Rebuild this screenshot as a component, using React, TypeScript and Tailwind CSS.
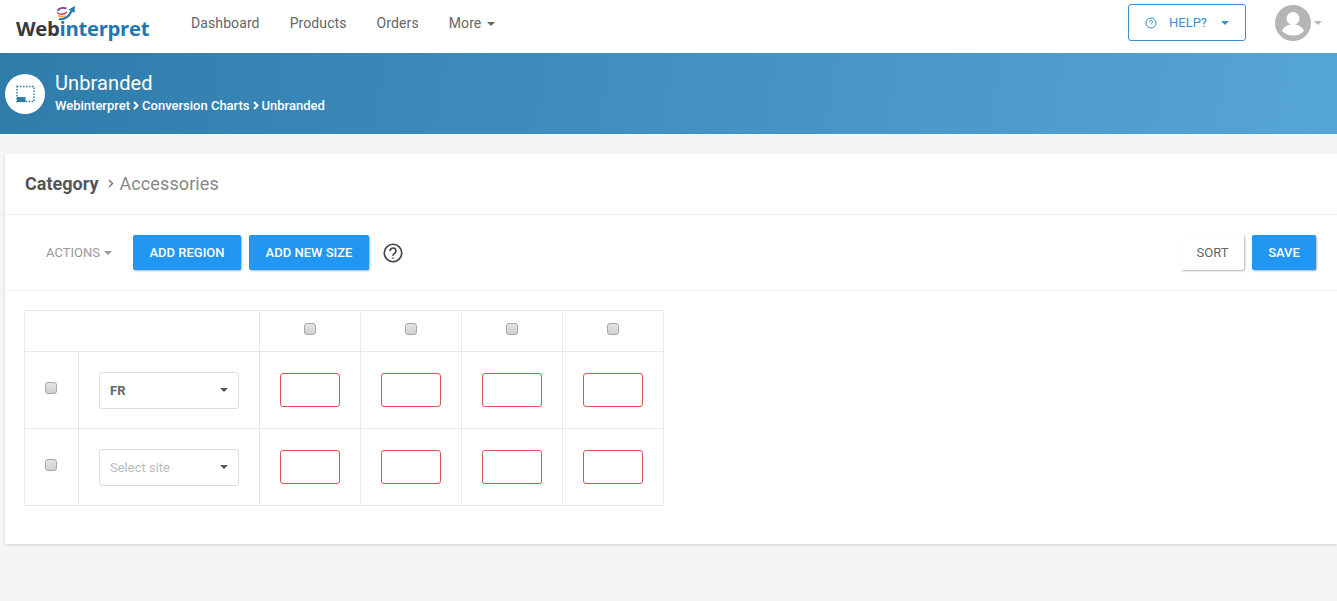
import React from "react";

const Caret = ({ className = "" }: { className?: string }) => (
  <span className={`inline-block w-0 h-0 border-x-4 border-x-transparent border-t-4 ${className}`} />
);

const Chevron = ({ className = "", weight = 1.4 }: { className?: string; weight?: number }) => (
  <svg className={className} width="6" height="9" viewBox="0 0 6 9" fill="none" stroke="currentColor" strokeWidth={weight}>
    <path d="M1 1l3.500 3.500L1 8" />
  </svg>
);

const Check = ({ className = "" }: { className?: string }) => (
  <span className={`block w-3 h-3 rounded-[3px] border border-[#a8a8a8] bg-[linear-gradient(#e4e4e4,#d0d0d0)] ${className}`} />
);

const SizeInput = () => <div className="w-[60px] h-[34px] border border-[#d9534f] rounded-[3px] bg-white" />;

const Logo = () => (
  <div className="relative w-[136px] h-[53px] self-start">
    <svg className="absolute left-[40px] top-[5px]" width="20" height="17" viewBox="0 0 20 17" fill="none">
      <path d="M1.500 6c1-3 6-4 9-2.500" stroke="#7b3f98" strokeWidth="1.800" />
      <path d="M1 7.500c3 2.500 7 2 10-.5" stroke="#d8403f" strokeWidth="1.500" />
      <path d="M2 10.500c2.500 1.500 5 1.500 7.500.5" stroke="#e8a33d" strokeWidth="1.500" />
      <path d="M3 14c5 1 10-2 12.500-8" stroke="#1f76b4" strokeWidth="2" />
      <path d="M12.500 4.500L19 1l-.5 7z" fill="#1f76b4" />
    </svg>
    <span className="absolute left-0 top-[14px] text-[20.300px] leading-[28px] font-bold font-['Open_Sans',sans-serif] tracking-[-0.3px] text-[#3b3b3b]">
      Web<span className="text-[#1f76b4]">interpret</span>
    </span>
  </div>
);

const Header = () => (
  <div className="h-[53px] bg-white flex items-center pl-4 pr-[15px] pb-[6px]">
    <Logo />
    <div className="flex items-center gap-[30px] ml-[39px] text-[14px] tracking-[0.1px] text-[#666]">
      <span>Dashboard</span>
      <span>Products</span>
      <span>Orders</span>
      <span className="flex items-center gap-[6px]">
        More <Caret className="border-t-[#666]" />
      </span>
    </div>
    <div className="ml-auto -mt-[2px] flex items-center">
      <div className="w-[118px] h-[37px] border border-[#3a8fd0] rounded-[3px] flex items-center pl-[16px] text-[13px] text-[#3a8fd0]">
        <svg width="12" height="12" viewBox="0 0 24 24" fill="none" stroke="#3a8fd0" strokeWidth="2">
          <circle cx="12" cy="12" r="10" />
          <path d="M9 9.500a3 3 0 1 1 4.500 2.600c-1 .6-1.500 1.200-1.500 2.400M12 17.500v.5" />
        </svg>
        <span className="ml-[12px]">HELP?</span>
        <Caret className="ml-[14px] border-t-[#3a8fd0]" />
      </div>
      <div className="ml-[29px] flex items-center gap-[3px]">
        <svg width="36" height="36" viewBox="0 0 36 36">
          <circle cx="18" cy="18" r="18" fill="#b5b5b5" />
          <circle cx="18" cy="13.500" r="6.500" fill="white" />
          <path d="M7 26c2-5 6-6.500 11-6.500s9 1.500 11 6.500c-3 3-7 4.500-11 4.500S10 29 7 26z" fill="white" />
        </svg>
        <Caret className="border-t-[#b5b5b5]" />
      </div>
    </div>
  </div>
);

const Banner = () => (
  <div className="h-[81px] bg-[linear-gradient(100deg,#2f7cab,#55a5d6)] flex items-center pl-[5px] text-white">
    <div className="w-10 h-10 rounded-full bg-white flex items-center justify-center">
      <svg width="20" height="18" viewBox="0 0 20 18" fill="none">
        <rect x="2" y="1.500" width="17" height="15" stroke="#2f7cab" strokeWidth="1.500" strokeDasharray="1.500 1.500" />
        <rect x="2" y="12" width="8.500" height="5" fill="#2f7cab" />
      </svg>
    </div>
    <div className="ml-[10px] -mt-px">
      <div className="text-[20px] leading-[24px] tracking-[0.1px]">Unbranded</div>
      <div className="text-[13px] leading-[21px] flex items-center font-medium">
        Webinterpret <Chevron className="mx-[3px]" weight={2} /> Conversion Charts
        <Chevron className="mx-[3px]" weight={2} /> Unbranded
      </div>
    </div>
  </div>
);

const PrimaryButton = ({ label, width }: { label: string; width: string }) => (
  <button className={`${width} h-[35px] rounded-[2px] bg-[#2196f3] text-white text-[13px] font-medium shadow-[1px_1px_2px_rgba(0,0,0,0.3)]`}>
    {label}
  </button>
);

const SiteSelect = ({ value, placeholder }: { value?: string; placeholder?: string }) => (
  <div className="w-[140px] h-[37px] border border-[#ddd] rounded-[3px] bg-white flex items-center justify-between pl-[10px] pr-[10px] text-[13px]">
    {value ? <span className="pt-[2px] font-bold text-[#666]">{value}</span> : <span className="pt-[2px] text-[#bbb]">{placeholder}</span>}
    <Caret className="border-t-[#555]" />
  </div>
);

const columns = [0, 1, 2, 3];

const SizeRow = ({ value, placeholder }: { value?: string; placeholder?: string }) => (
  <tr className="h-[77px]">
    <td className="border border-[#e8e8e8] w-[54px]">
      <div className="flex justify-center -mt-[4px]">
        <Check className="-ml-px" />
      </div>
    </td>
    <td className="border border-[#e8e8e8] w-[181px]">
      <div className="flex justify-center">
        <SiteSelect value={value} placeholder={placeholder} />
      </div>
    </td>
    {columns.map((c) => (
      <td key={c} className="border border-[#e8e8e8] w-[101px]">
        <div className="flex justify-center">
          <SizeInput />
        </div>
      </td>
    ))}
  </tr>
);

export default function App() {
  return (
    <div className="min-h-[601px] bg-[#f5f5f5] font-['Roboto',sans-serif] overflow-hidden">
      <Header />
      <Banner />
      <div className="mt-5 ml-[5px] h-[390px] bg-white shadow-[0_1px_3px_rgba(0,0,0,0.15)]">
        <div className="h-[61px] border-b border-[#eee] flex items-center pl-5 pb-[2px] text-[18px]">
          <span className="font-bold text-[#555]">Category</span>
          <Chevron className="ml-[10px] text-[#777]" />
          <span className="ml-[5px] text-[#888] tracking-[0.1px]">Accessories</span>
        </div>
        <div className="h-[76px] border-b border-[#eee] flex items-center pl-[41px] pr-[21px]">
          <span className="flex items-center gap-[4px] text-[13px] text-[#999] w-[87px]">
            ACTIONS <Caret className="border-t-[#999]" />
          </span>
          <PrimaryButton label="ADD REGION" width="w-[108px]" />
          <div className="w-2" />
          <PrimaryButton label="ADD NEW SIZE" width="w-[120px]" />
          <svg className="ml-[14px]" width="20" height="20" viewBox="0 0 24 24" fill="none" stroke="#444" strokeWidth="2">
            <circle cx="12" cy="12" r="10.500" />
            <path d="M8.500 9.500a3.500 3.500 0 1 1 5.500 2.900c-1.300.8-2 1.500-2 2.800M12 17.500v1.500" />
          </svg>
          <div className="ml-auto flex items-center gap-2">
            <button className="w-[63px] h-[35px] rounded-[2px] bg-white text-[#666] text-[13px] shadow-[1px_1px_2px_rgba(0,0,0,0.3)]">
              SORT
            </button>
            <PrimaryButton label="SAVE" width="w-[64px]" />
          </div>
        </div>
        <div className="pl-[19px] pt-[19px]">
          <table className="border-collapse">
            <tbody>
              <tr className="h-[41px]">
                <td colSpan={2} className="border border-[#e8e8e8]" />
                {columns.map((c) => (
                  <td key={c} className="border border-[#e8e8e8]">
                    <div className="flex justify-center -mt-[4px]">
                      <Check />
                    </div>
                  </td>
                ))}
              </tr>
              <SizeRow value="FR" />
              <SizeRow placeholder="Select site" />
            </tbody>
          </table>
        </div>
      </div>
    </div>
  );
}
